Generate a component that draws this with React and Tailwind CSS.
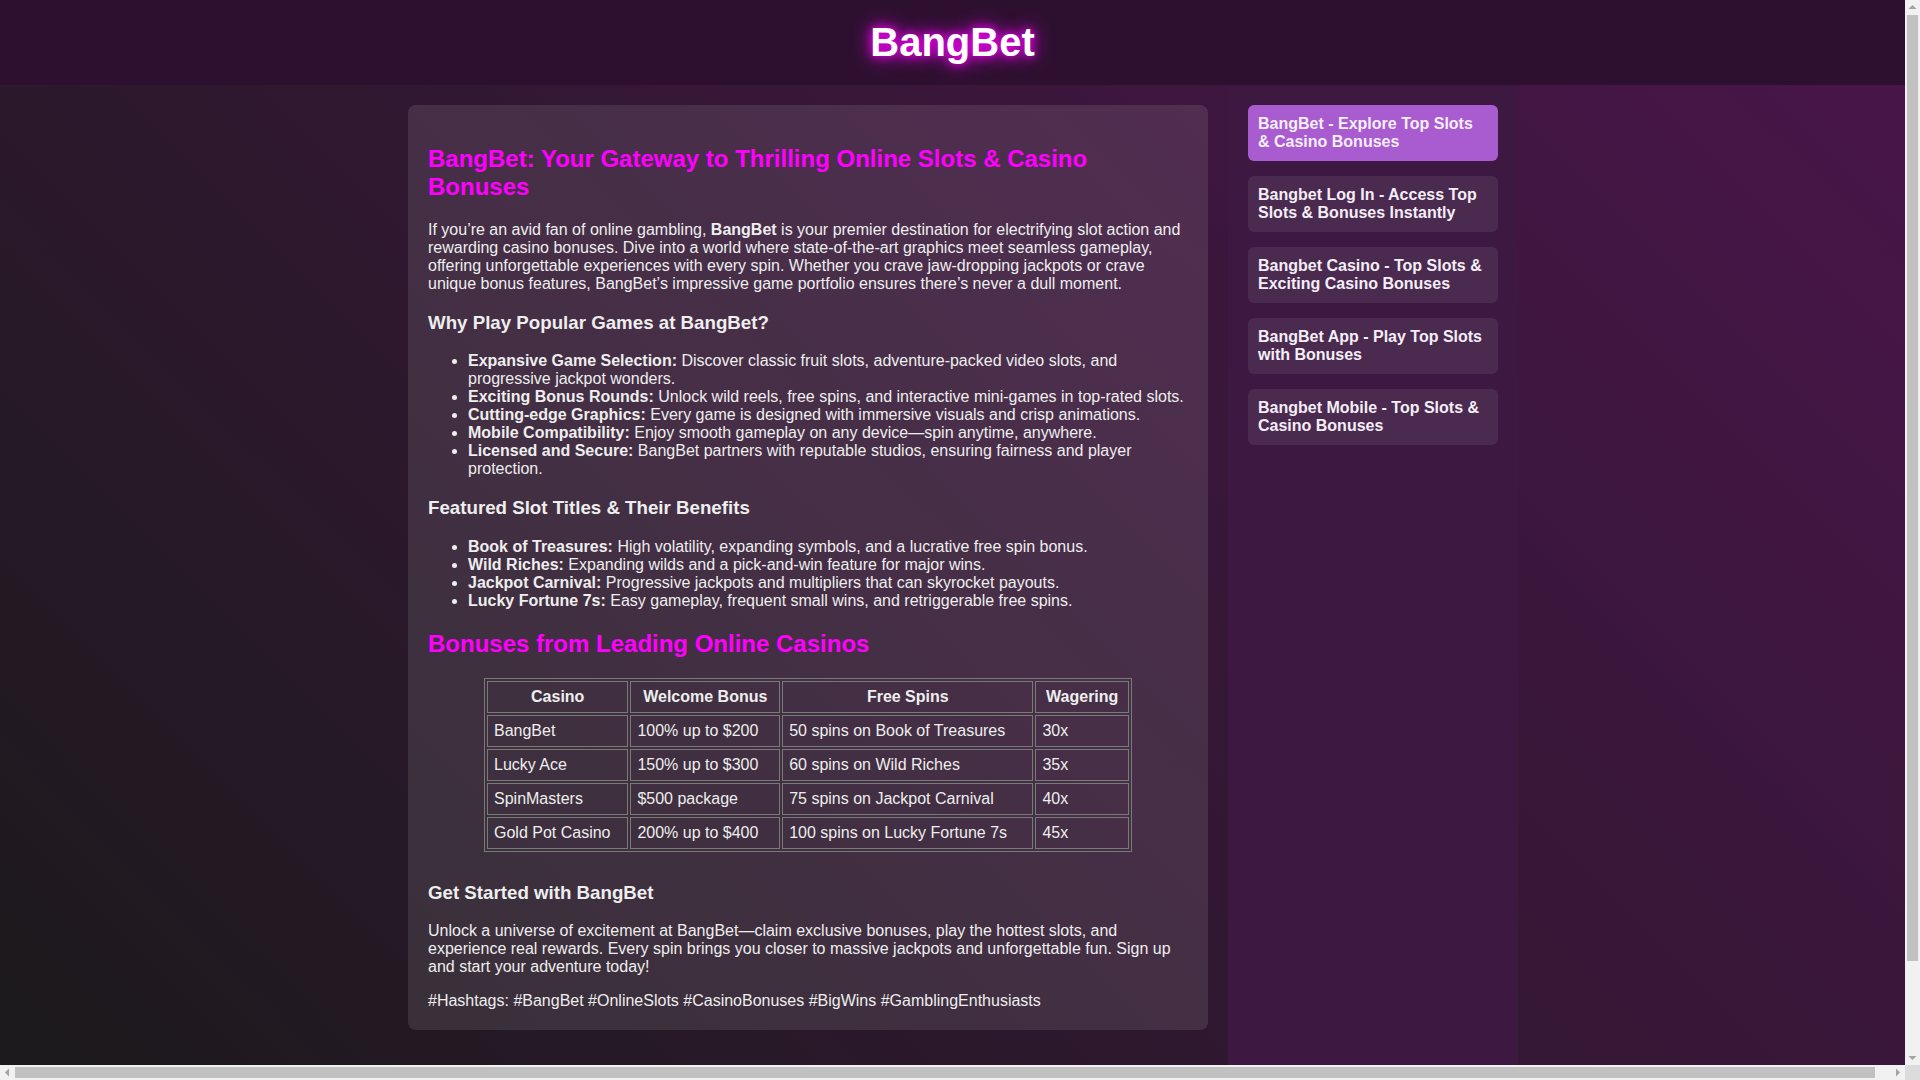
import React from "react";

const sideLinks = [
  "BangBet - Explore Top Slots & Casino Bonuses",
  "Bangbet Log In - Access Top Slots & Bonuses Instantly",
  "Bangbet Casino - Top Slots & Exciting Casino Bonuses",
  "BangBet App - Play Top Slots with Bonuses",
  "Bangbet Mobile - Top Slots & Casino Bonuses",
];

const whyPlay = [
  ["Expansive Game Selection:", "Discover classic fruit slots, adventure-packed video slots, and progressive jackpot wonders."],
  ["Exciting Bonus Rounds:", "Unlock wild reels, free spins, and interactive mini-games in top-rated slots."],
  ["Cutting-edge Graphics:", "Every game is designed with immersive visuals and crisp animations."],
  ["Mobile Compatibility:", "Enjoy smooth gameplay on any device—spin anytime, anywhere."],
  ["Licensed and Secure:", "BangBet partners with reputable studios, ensuring fairness and player protection."],
];

const featured = [
  ["Book of Treasures:", "High volatility, expanding symbols, and a lucrative free spin bonus."],
  ["Wild Riches:", "Expanding wilds and a pick-and-win feature for major wins."],
  ["Jackpot Carnival:", "Progressive jackpots and multipliers that can skyrocket payouts."],
  ["Lucky Fortune 7s:", "Easy gameplay, frequent small wins, and retriggerable free spins."],
];

const bonuses = [
  ["BangBet", "100% up to $200", "50 spins on Book of Treasures", "30x"],
  ["Lucky Ace", "150% up to $300", "60 spins on Wild Riches", "35x"],
  ["SpinMasters", "$500 package", "75 spins on Jackpot Carnival", "40x"],
  ["Gold Pot Casino", "200% up to $400", "100 spins on Lucky Fortune 7s", "45x"],
];

// little arrow for the scrollbar buttons
const Arrow = ({ dir }) => {
  const pts = {
    up: "3.5,9 7.5,5 11.5,9",
    down: "3.5,6 7.5,10 11.5,6",
    left: "9,3.5 5,7.5 9,11.5",
    right: "6,3.5 10,7.5 6,11.5",
  }[dir];
  return (
    <svg width="15" height="15" viewBox="0 0 15 15">
      <polygon points={pts} fill="#a3a3a3" />
    </svg>
  );
};

function Page() {
  return (
    <div className="min-h-full bg-[linear-gradient(45deg,#1a1a1a,#4a154b)] font-['Liberation_Sans',Arial,sans-serif] leading-[normal] text-[#eeeeee]">
      <header className="bg-[#2d1030] py-5 text-center">
        <h1 className="text-[40px] font-bold text-white [text-shadow:0_0_10px_#ff00ff,0_0_20px_#ff00ff]">
          BangBet
        </h1>
      </header>

      <div className="flex w-[1920px] justify-center gap-5 pl-[6px]">
        <main className="mt-5 mb-5 w-[800px] self-start rounded-lg bg-white/10 p-5 text-[16px]">
          <h2 className="my-[19.92px] text-[24px] font-bold text-[#ff00ff]">
            BangBet: Your Gateway to Thrilling Online Slots &amp; Casino Bonuses
          </h2>
          <p className="my-4">
            If you’re an avid fan of online gambling, <strong className="font-bold">BangBet</strong> is your premier
            destination for electrifying slot action and rewarding casino bonuses. Dive into a world where
            state-of-the-art graphics meet seamless gameplay, offering unforgettable experiences with every spin.
            Whether you crave jaw-dropping jackpots or crave unique bonus features, BangBet’s impressive game
            portfolio ensures there’s never a dull moment.
          </p>

          <h3 className="my-[18.72px] text-[18.72px] font-bold">Why Play Popular Games at BangBet?</h3>
          <ul className="my-4 list-disc pl-10">
            {whyPlay.map(([label, text]) => (
              <li key={label}>
                <strong className="font-bold">{label}</strong> {text}
              </li>
            ))}
          </ul>

          <h3 className="my-[18.72px] text-[18.72px] font-bold">Featured Slot Titles &amp; Their Benefits</h3>
          <ul className="my-4 list-disc pl-10">
            {featured.map(([label, text]) => (
              <li key={label}>
                <strong className="font-bold">{label}</strong> {text}
              </li>
            ))}
          </ul>

          <h2 className="my-[19.92px] text-[24px] font-bold text-[#ff00ff]">Bonuses from Leading Online Casinos</h2>

          <table className="mx-auto mt-5 mb-[30px] w-[648px] border-separate border-spacing-[2px] border border-[#7a7a7a]">
            <thead>
              <tr>
                {["Casino", "Welcome Bonus", "Free Spins", "Wagering"].map((h) => (
                  <th key={h} className="border border-[#7a7a7a] p-[6px] text-center font-bold">
                    {h}
                  </th>
                ))}
              </tr>
            </thead>
            <tbody>
              {bonuses.map((row) => (
                <tr key={row[0]}>
                  {row.map((cell, i) => (
                    <td key={i} className="border border-[#7a7a7a] p-[6px] text-left">
                      {cell}
                    </td>
                  ))}
                </tr>
              ))}
            </tbody>
          </table>

          <h3 className="my-[18.72px] text-[18.72px] font-bold">Get Started with BangBet</h3>
          <p className="my-4">
            Unlock a universe of excitement at BangBet—claim exclusive bonuses, play the hottest slots, and
            experience real rewards. Every spin brings you closer to massive jackpots and unforgettable fun. Sign up
            and start your adventure today!
          </p>
          <div>#Hashtags: #BangBet #OnlineSlots #CasinoBonuses #BigWins #GamblingEnthusiasts</div>
        </main>

        <aside className="flex h-screen w-[290px] shrink-0 flex-col gap-[15px] bg-[#3d1840] p-5">
          {sideLinks.map((link, i) => (
            <a
              key={link}
              href="#"
              className={
                i === 0
                  ? "block rounded-md bg-[#a95bd0] p-[10px] text-[16px] font-bold text-[#f4eef6]"
                  : "block rounded-md bg-[#4b2a50] p-[10px] text-[16px] font-bold text-[#f4eef6]"
              }
            >
              {link}
            </a>
          ))}
        </aside>
      </div>
    </div>
  );
}

export default function App() {
  return (
    <div className="flex h-screen w-screen flex-col overflow-hidden">
      <div className="flex min-h-0 flex-1">
        <div className="min-w-0 flex-1 overflow-hidden">
          <Page />
        </div>
        {/* vertical scrollbar */}
        <div className="flex w-[15px] shrink-0 flex-col bg-[#f1f1f1]">
          <Arrow dir="up" />
          <div className="flex-1 px-[2px]">
            <div className="h-[946px] bg-[#c1c1c1]" />
          </div>
          <Arrow dir="down" />
        </div>
      </div>
      {/* horizontal scrollbar */}
      <div className="flex h-[15px] shrink-0 bg-[#f1f1f1]">
        <Arrow dir="left" />
        <div className="flex-1 py-[2px]">
          <div className="h-full w-[1860px] bg-[#c1c1c1]" />
        </div>
        <Arrow dir="right" />
        <div className="w-[15px] bg-[#dcdcdc]" />
      </div>
    </div>
  );
}
